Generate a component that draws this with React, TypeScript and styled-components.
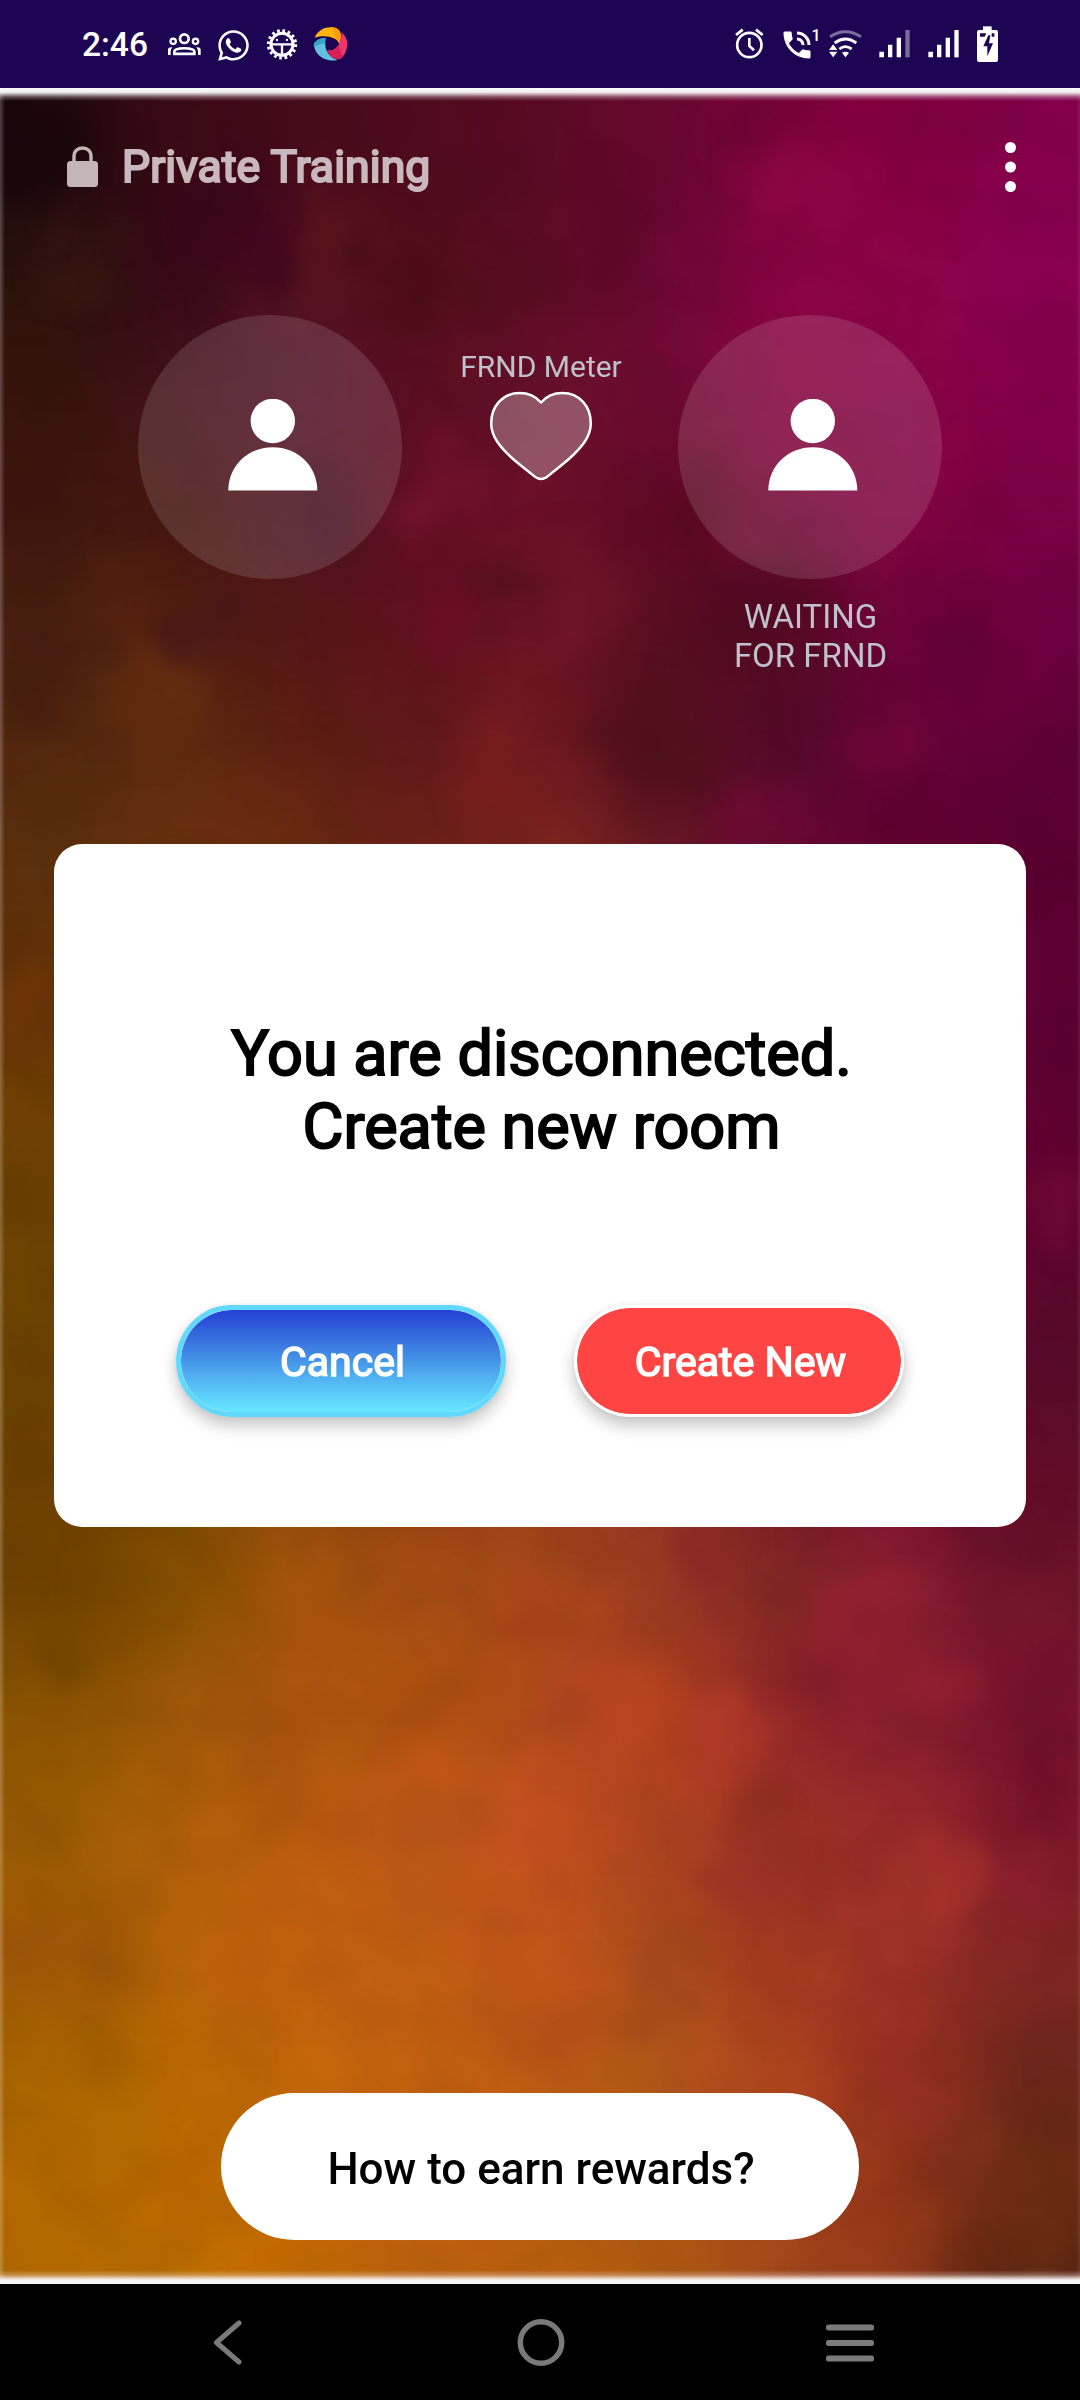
import React from 'react';
import styled, { createGlobalStyle } from 'styled-components';
import { FaWhatsapp } from 'react-icons/fa';
import { MdPhoneInTalk } from 'react-icons/md';

const GlobalStyle = createGlobalStyle`
  * { box-sizing: border-box; }
  body { margin: 0; background: #000; font-family: Roboto, 'Noto Sans', sans-serif; }
  svg { display: block; flex: none; }
`;

const Phone = styled.div`
  width: 1080px;
  height: 2400px;
  display: flex;
  flex-direction: column;
  overflow: hidden;
`;

/* ---------- status bar ---------- */

const StatusBar = styled.header`
  flex: none;
  height: 88px;
  padding: 20px 81px 18px 82px;
  display: flex;
  justify-content: space-between;
  background: #1d0554;
  color: #fff;
`;

const StatusGroup = styled.div`
  display: flex;
  align-items: center;
  height: 50px;
`;

const Clock = styled.span`
  width: 84px;
  font-size: 33.5px;
  font-weight: 500;
  line-height: 52px;
`;

const Slot = styled.span<{ $gap?: number; $w: number }>`
  flex: none;
  display: flex;
  justify-content: center;
  width: ${(p) => p.$w}px;
  margin-left: ${(p) => p.$gap ?? 0}px;
`;

const LineBadge = styled.span`
  align-self: flex-start;
  width: 9px;
  margin: 7px 0 0 -3px;
  font-size: 16px;
  font-weight: 500;
  line-height: 17px;
`;

function StatusGlyph({ x, w, children }: { x: number; w: number; children: React.ReactNode }) {
  return (
    <svg width={w} height={50} viewBox={`${x} 0 ${w * 3} 150`} fill="none">
      {children}
    </svg>
  );
}

const PeopleIcon = () => (
  <StatusGlyph x={18} w={36}>
    <g stroke="#fff" strokeWidth="8">
      <circle cx="73" cy="56" r="13" />
      <circle cx="39.5" cy="64" r="8" strokeWidth="7" />
      <circle cx="106.5" cy="64" r="8" strokeWidth="7" />
      <path d="M43 101.500v-7c0-13 60-13 60 0v7z" />
    </g>
    <path d="M24 105V88q1-7 13-6-5 6-5 12v11zM122 105V88q-1-7-13-6 5 6 5 12v11z" fill="#fff" />
  </StatusGlyph>
);

const BugGearIcon = () => (
  <StatusGlyph x={315} w={34}>
    <circle cx="366" cy="73" r="33" stroke="#fff" strokeWidth="9" />
    <circle cx="366" cy="73" r="41" stroke="#fff" strokeWidth="9" strokeDasharray="8 8.1" />
    <path d="M333 73h66M366 73v34" stroke="#fff" strokeWidth="7" />
    <circle cx="351" cy="60" r="3.500" fill="#fff" />
    <circle cx="381" cy="60" r="3.500" fill="#fff" />
  </StatusGlyph>
);

const SwirlIcon = () => (
  <StatusGlyph x={459} w={35}>
    <path d="M464 53C474 30 494 21 516 22c14 1 22 7 25 16 3 12 0 24-3 33-8-18-38-28-74-18z" fill="#ffb40e" />
    <path d="M510 22c18-1 28 6 31 16 3 12 0 24-3 33-3-9-10-15-15-18 2-13-2-24-13-31z" fill="#ff9a0a" />
    <path d="M497 54c-5 26 2 56 36 66-32 8-72-12-71-50 8-11 20-16 35-16z" fill="#62c1dd" />
    <path d="M497 54c-14 0-27 5-35 16l-1 9c12-3 22-8 33-8z" fill="#35a5c6" />
    <path d="M544 37c14 11 20 26 17 43-3 18-10 30-22 38-18 1-32-11-37-27 22 5 45-18 42-54z" fill="#ee356f" />
    <path d="M502 91c14 3 27-4 34-16 3 16 10 28 12 35l-9 8c-18 1-32-11-37-27z" fill="#d91f54" />
  </StatusGlyph>
);

const AlarmIcon = () => (
  <StatusGlyph x={27} w={31}>
    <circle cx="73" cy="75" r="36.500" stroke="#fff" strokeWidth="8" />
    <path d="M33 45l20-16M113 45L93 29" stroke="#fff" strokeWidth="8.500" />
    <path d="M73 54v24l14 13" stroke="#fff" strokeWidth="8" />
  </StatusGlyph>
);

const WifiIcon = () => (
  <StatusGlyph x={309} w={35}>
    <path d="M315 50q46-30 93 0" stroke="#fff" strokeOpacity=".42" strokeWidth="9" />
    <path d="M329 69q32-24 65 0M343 87q18-14 37 0" stroke="#fff" strokeWidth="8.500" />
    <path d="M351 98q10-5 21 0l-10.500 14z" fill="#fff" />
    <path d="M312 90h25l-12.500-17zM312 95h25l-12.500 17z" fill="#fff" />
  </StatusGlyph>
);

const SignalIcon = ({ weak }: { weak?: boolean }) => (
  <StatusGlyph x={459} w={32}>
    <path d="M463 95h14v17h-14zM489 74h13v38h-13zM515 53h13v59h-13z" fill="#fff" />
    <path d="M541 30h13v82h-13z" fill="#fff" fillOpacity={weak ? 0.42 : 1} />
  </StatusGlyph>
);

const BatteryIcon = () => (
  <StatusGlyph x={753} w={23}>
    <rect x="756" y="30" width="63" height="96" rx="6" fill="#fff" />
    <path d="M774 19h26v14h-26z" fill="#fff" />
    <path d="M765 40h19l-5 10h-14zM800 40h8v10h-8z" fill="#1d0554" />
    <path d="M790 46l-15 33h12v30l17-39h-12l4-24z" fill="#1d0554" />
  </StatusGlyph>
);

/* ---------- backdrop ---------- */

const Screen = styled.main`
  position: relative;
  isolation: isolate;
  flex: none;
  height: 2196px;
  display: flex;
  flex-direction: column;
  align-items: center;
`;

const BackdropLayer = styled.div`
  position: absolute;
  inset: 0;
  z-index: -1;
  overflow: hidden;

  &::after {
    content: '';
    position: absolute;
    inset: 0;
    background:
      linear-gradient(to bottom, #f8f8f8 0, #f4f2f3 4px, rgba(240, 236, 238, 0.75) 6px, rgba(235, 225, 230, 0.32) 9px, rgba(235, 225, 230, 0) 13px),
      linear-gradient(to top, #f8f8f8 0, #f4f2f3 4px, rgba(245, 240, 238, 0.75) 6px, rgba(240, 230, 225, 0.32) 9px, rgba(240, 230, 225, 0) 14px),
      linear-gradient(to right, rgba(255, 255, 255, 0.24) 0, rgba(255, 255, 255, 0) 5px),
      linear-gradient(to left, rgba(255, 255, 255, 0.08) 0, rgba(255, 255, 255, 0) 4px);
  }
`;

/* Colour samples of the artwork: one row every 120px, one column every 120px. */
const MESH = [
  '22090e 3c0a16 480d1a 500b1e 5a0a24 680830 7c043a 880042 84004a',
  '2c120c 380818 581320 521018 5e0c24 6c0834 8a0444 8c0446 880050',
  '36140c 44121a 521228 5c0e22 66102a 700a34 86043e 8a0448 86004a',
  '40170e 48150f 4e1420 640f22 6e1028 600a26 780838 820440 7e0046',
  '482010 542010 521616 66121e 6c1424 5c1020 520a22 70043a 6c0040',
  '56280e 602c10 602012 621a1a 721a20 54101e 540a2a 660436 5e0038',
  '5c300c 6a300c 6c2c10 6c2018 80281e 6c1a22 6c0a34 620030 5c0030',
  '643208 6a300c 6a2c10 6c2018 7c241e 6c1a22 6c0a34 620030 5e0034',
  '704004 703808 702c10 702018 7c241e 6c1a22 6c0a34 620030 600030',
  '684002 703c08 703010 702818 80281e 6c1a22 6c0a34 620030 620430',
  '6e4400 744004 803c10 803018 8c301e 7c2022 701030 680830 580a2a',
  '6c4000 7c4800 904a0c 984014 98401a 8c3022 801828 780c2c 600c28',
  '704200 865000 a4540c a44c14 aa481a a03c22 802824 8e2032 701428',
  '8c5400 a05808 ae5410 b4520e b44c1c b8441f 922628 8c1e30 7a142e',
  '9c5c04 b06008 bc5c0e c0561a c25020 b64622 983024 9a2a2a 7e162a',
  'a05806 b8620a c4600e c05c12 c2541a aa4a1c a03620 a4322a 842624',
  'a86400 b86802 c6680c c4600f be5a14 b85a1a b0461e 98301f 70281c',
  'b46800 ba6800 c66a06 c06010 bc6010 b05818 a8441c 903418 6c2c14',
  'b26900 c07000 c66c02 c0640c b85e0c b05a0c a44a1c 88341c 542210',
].map((row) => row.split(' '));

const COLS = [0, 0, 1, 2, 3, 4, 5, 6, 7, 8, 8];

/* Cloudy patches over the mesh: cx, cy, rx, ry, colour, opacity. */
const CLOUDS: [number, number, number, number, string, number][] = [
  [20, 150, 50, 70, '#12030a', 0.5],
  [240, 230, 70, 60, '#3c0420', 0.6],
  [330, 250, 34, 60, '#66181a', 0.55],
  [410, 290, 46, 44, '#4a0c14', 0.6],
  [90, 270, 30, 50, '#3c1a10', 0.6],
  [615, 250, 26, 60, '#560826', 0.5],
  [800, 190, 70, 50, '#920648', 0.45],
  [900, 150, 30, 50, '#78003a', 0.5],
  [830, 290, 60, 30, '#92084a', 0.5],
  [500, 300, 50, 30, '#54101a', 0.5],
  [440, 475, 40, 45, '#781430', 0.6],
  [330, 520, 44, 40, '#441028', 0.5],
  [700, 520, 40, 50, '#56081e', 0.6],
  [500, 590, 36, 32, '#4e1018', 0.7],
  [450, 610, 30, 36, '#780c2c', 0.5],
  [580, 600, 40, 60, '#76182a', 0.5],
  [750, 600, 60, 40, '#500822', 0.6],
  [200, 640, 32, 36, '#46161a', 0.65],
  [120, 610, 40, 50, '#5c240e', 0.5],
  [160, 700, 50, 50, '#6a300e', 0.6],
  [30, 680, 30, 50, '#421a10', 0.6],
  [500, 770, 40, 60, '#82201e', 0.5],
  [650, 740, 60, 50, '#521018', 0.6],
  [890, 750, 34, 38, '#78063c', 0.6],
  [760, 810, 40, 36, '#78083a', 0.5],
  [1010, 700, 40, 60, '#700040', 0.5],
  [940, 640, 40, 40, '#60003a', 0.5],
  [20, 1010, 24, 60, '#7a3a08', 0.6],
  [1060, 1200, 24, 60, '#740c34', 0.6],
  [1060, 1060, 22, 50, '#560030', 0.6],
  [20, 1250, 24, 50, '#744804', 0.6],
  [60, 1660, 44, 30, '#744600', 0.5],
  [130, 1580, 50, 30, '#744400', 0.5],
  [320, 1590, 40, 50, '#b0560e', 0.5],
  [530, 1610, 30, 40, '#a43c18', 0.5],
  [480, 1690, 30, 30, '#a44a10', 0.6],
  [700, 1570, 30, 44, '#8c2428', 0.6],
  [860, 1620, 50, 36, '#9c2030', 0.6],
  [1000, 1540, 40, 40, '#64102a', 0.6],
  [1040, 1600, 30, 30, '#78182c', 0.5],
  [590, 1690, 50, 50, '#ba4424', 0.5],
  [730, 1735, 34, 44, '#b43c2a', 0.6],
  [830, 1680, 40, 50, '#881e2c', 0.55],
  [1050, 1700, 34, 60, '#78102e', 0.6],
  [930, 1690, 36, 40, '#9c2230', 0.5],
  [1040, 1780, 26, 50, '#6a0e26', 0.6],
  [450, 1770, 70, 36, '#c45818', 0.5],
  [340, 1760, 40, 40, '#b05c0c', 0.5],
  [560, 1800, 50, 50, '#c44e22', 0.5],
  [420, 1840, 40, 30, '#b45618', 0.5],
  [740, 1860, 50, 50, '#943024', 0.6],
  [930, 1880, 50, 40, '#ac342c', 0.6],
  [1030, 1870, 30, 36, '#902030', 0.6],
  [500, 1900, 50, 40, '#c6581a', 0.5],
  [670, 1975, 34, 44, '#a0441c', 0.65],
  [820, 1960, 36, 40, '#ae4022', 0.5],
  [840, 2010, 40, 40, '#9c3422', 0.6],
  [70, 1950, 60, 34, '#9a5208', 0.5],
  [140, 1950, 34, 40, '#b06404', 0.4],
  [240, 1990, 40, 50, '#c0600e', 0.5],
  [570, 2030, 50, 40, '#c2501a', 0.5],
  [610, 2070, 36, 30, '#b05a14', 0.6],
  [710, 2090, 36, 40, '#b44a20', 0.5],
  [910, 2080, 50, 40, '#962e24', 0.5],
  [1040, 2200, 30, 90, '#6c3014', 0.5],
  [970, 2150, 40, 50, '#803020', 0.5],
  [110, 2120, 40, 50, '#b06c00', 0.5],
  [880, 2260, 50, 40, '#a04018', 0.5],
];

function Backdrop() {
  return (
    <BackdropLayer>
      <svg width="1080" height="2196" viewBox="0 88 1080 2196">
        <defs>
          <filter id="melt" filterUnits="userSpaceOnUse" x="-120" y="-60" width="1320" height="2520" colorInterpolationFilters="sRGB">
            <feGaussianBlur stdDeviation="42" />
          </filter>
          <filter id="haze" filterUnits="userSpaceOnUse" x="-120" y="-60" width="1320" height="2520" colorInterpolationFilters="sRGB">
            <feGaussianBlur stdDeviation="15" result="soft" />
            <feTurbulence type="fractalNoise" baseFrequency="0.016" numOctaves="2" seed="7" result="noise" />
            <feDisplacementMap in="soft" in2="noise" scale="85" xChannelSelector="R" yChannelSelector="G" />
            <feGaussianBlur stdDeviation="6" />
          </filter>
          <filter id="mottle" filterUnits="userSpaceOnUse" x="0" y="88" width="1080" height="2196" colorInterpolationFilters="sRGB">
            <feTurbulence type="fractalNoise" baseFrequency="0.013" numOctaves="2" seed="3" />
            <feColorMatrix values="0 0 0 0 0  0 0 0 0 0  0 0 0 0 0  1.6 0 0 0 -0.6" />
          </filter>
        </defs>
        <g filter="url(#melt)" shapeRendering="crispEdges">
          {[MESH[0], ...MESH, MESH[MESH.length - 1]].map((row, r) =>
            COLS.map((c, i) => (
              <rect key={`${r}-${i}`} x={(i - 1) * 120} y={90 + (r - 1) * 120} width="120" height="120" fill={`#${row[c]}`} />
            )),
          )}
        </g>
        <g filter="url(#haze)">
          {CLOUDS.map(([cx, cy, rx, ry, fill, opacity], i) => (
            <ellipse key={i} cx={cx} cy={cy} rx={rx} ry={ry} fill={fill} opacity={opacity} />
          ))}
        </g>
        <rect y="88" width="1080" height="2196" filter="url(#mottle)" opacity="0.09" />
      </svg>
    </BackdropLayer>
  );
}

/* ---------- room ---------- */

const RoomHeader = styled.div`
  align-self: stretch;
  height: 158px;
  padding: 0 64px 0 67px;
  display: flex;
  align-items: center;
`;

const RoomTitle = styled.h1`
  flex: 1;
  margin: 0 0 0 24px;
  font-size: 44.5px;
  font-weight: 400;
  line-height: 54px;
  letter-spacing: 0.1px;
  color: #c9b8be;
  -webkit-text-stroke: 2.2px #c9b8be;
`;

const Participants = styled.section`
  width: 804px;
  height: 360px;
  margin-top: 69px;
  display: grid;
  grid-template-columns: 264px 1fr 264px;
`;

const Seat = styled.div`
  display: flex;
  flex-direction: column;
  align-items: center;
`;

const Avatar = styled.div`
  width: 264px;
  height: 264px;
  padding: 84px 0 0 90px;
  border-radius: 50%;
  background: rgba(255, 255, 255, 0.125);
`;

const SeatLabel = styled.p`
  width: 170px;
  margin: 18px 0 0;
  padding-left: 1px;
  font-size: 33px;
  line-height: 39px;
  text-align: center;
  color: #bfc2cc;
`;

const Meter = styled.div`
  display: flex;
  flex-direction: column;
  align-items: center;
  padding: 34px 0 0 2px;
`;

const MeterLabel = styled.span`
  margin-bottom: 6px;
  font-size: 30px;
  line-height: 36px;
  color: #bfc2cc;
`;

const PersonIcon = () => (
  <svg width="90" height="92" viewBox="0 0 90 92" fill="#fff">
    <circle cx="44.800" cy="22" r="22.200" />
    <path d="M0.300 91.600C0.300 67 19.800 48.200 44.800 48.200S89.300 67 89.300 91.600z" />
  </svg>
);

const HeartIcon = () => (
  <svg width="104" height="90" viewBox="0 0 104 90">
    <path
      d="M52 11.500C46 4.500 39 2 30.500 2 14 2 2.200 15 2.200 32.500 2.200 46 12 57 23 67c8 7.200 15 12 21.500 17.600 2.500 2.200 5 3.400 7.500 3.400s5-1.200 7.500-3.400C66 79 73 74.200 81 67c11-10 20.800-21 20.800-34.500C101.800 15 90 2 73.500 2 65 2 58 4.500 52 11.500z"
      fill="#fff"
      fillOpacity=".28"
      stroke="#fff"
      strokeWidth="2.500"
      strokeLinejoin="round"
    />
  </svg>
);

/* ---------- dialog ---------- */

const Dialog = styled.section`
  width: 972px;
  height: 683px;
  margin-top: 169px;
  padding-top: 173px;
  display: flex;
  flex-direction: column;
  align-items: center;
  border-radius: 28px;
  background: #fff;
`;

const Message = styled.p`
  width: 700px;
  margin: 0;
  padding-left: 3px;
  font-size: 63px;
  line-height: 73px;
  text-align: center;
  color: #000;
  -webkit-text-stroke: 2px #000;
`;

const Actions = styled.div`
  display: flex;
  gap: 68px;
  margin-top: 142px;
`;

const PillButton = styled.button<{ $primary?: boolean }>`
  width: 330px;
  height: 112px;
  padding: 2px 0 0 3px;
  border: ${(p) => (p.$primary ? '3px solid #fff' : '5px solid #62d8ff')};
  border-radius: 56px;
  background: ${(p) =>
    p.$primary
      ? '#ff4444 padding-box'
      : 'linear-gradient(to bottom, #2440d4 0%, #3f87e4 42%, #52b4f2 68%, #66e8ff 100%) padding-box'};
  box-shadow: 0 9px 16px rgba(0, 0, 0, 0.22), 0 0 5px rgba(0, 0, 0, 0.07);
  font-family: inherit;
  font-size: 41px;
  line-height: 48px;
  color: #fff;
  -webkit-text-stroke: 1.5px #fff;
`;

const RewardsButton = styled.button`
  width: 638px;
  height: 147px;
  margin-top: 566px;
  padding: 4px 0 0 2px;
  border: 0;
  border-radius: 74px;
  background: #fff;
  font-family: inherit;
  font-size: 44px;
  font-weight: 500;
  line-height: 52px;
  color: #000;
`;

/* ---------- navigation bar ---------- */

const NavBar = styled.nav`
  flex: 1;
  padding: 2px 206px 0 212px;
  display: flex;
  align-items: center;
  justify-content: space-between;
  background: #000;
`;

const HomeKey = styled.span`
  margin-left: 13px;
`;

export default function App() {
  return (
    <>
      <GlobalStyle />
      <Phone>
        <StatusBar>
          <StatusGroup>
            <Clock>2:46</Clock>
            <Slot $w={36}><PeopleIcon /></Slot>
            <Slot $w={35} $gap={14}><FaWhatsapp size={35} /></Slot>
            <Slot $w={34} $gap={14}><BugGearIcon /></Slot>
            <Slot $w={35} $gap={14}><SwirlIcon /></Slot>
          </StatusGroup>
          <StatusGroup>
            <Slot $w={31}><AlarmIcon /></Slot>
            <Slot $w={36} $gap={13.5}><MdPhoneInTalk size={36} /></Slot>
            <LineBadge>1</LineBadge>
            <Slot $w={35} $gap={7.5}><WifiIcon /></Slot>
            <Slot $w={32} $gap={15}><SignalIcon weak /></Slot>
            <Slot $w={32} $gap={17}><SignalIcon /></Slot>
            <Slot $w={23} $gap={17}><BatteryIcon /></Slot>
          </StatusGroup>
        </StatusBar>

        <Screen>
          <Backdrop />
          <RoomHeader>
            <svg width="31" height="43" viewBox="0 0 31 43">
              <path d="M7 17v-6.500C7 5 10.500 2 15.500 2S24 5 24 10.500V17" fill="none" stroke="#c4b5b8" strokeWidth="3.400" />
              <rect y="15" width="31" height="26" rx="3.500" fill="#c4b5b8" />
            </svg>
            <RoomTitle>Private Training</RoomTitle>
            <svg width="11" height="50" viewBox="0 0 11 50" fill="#fff">
              <circle cx="5.500" cy="5.500" r="5.500" />
              <circle cx="5.500" cy="25" r="5.500" />
              <circle cx="5.500" cy="44.500" r="5.500" />
            </svg>
          </RoomHeader>

          <Participants>
            <Seat>
              <Avatar><PersonIcon /></Avatar>
            </Seat>
            <Meter>
              <MeterLabel>FRND Meter</MeterLabel>
              <HeartIcon />
            </Meter>
            <Seat>
              <Avatar><PersonIcon /></Avatar>
              <SeatLabel>WAITING FOR FRND</SeatLabel>
            </Seat>
          </Participants>

          <Dialog>
            <Message>You are disconnected. Create new room</Message>
            <Actions>
              <PillButton>Cancel</PillButton>
              <PillButton $primary>Create New</PillButton>
            </Actions>
          </Dialog>

          <RewardsButton>How to earn rewards?</RewardsButton>
        </Screen>

        <NavBar>
          <svg width="30" height="48" viewBox="0 0 30 48" fill="none" stroke="#7a7a7a" strokeWidth="5" strokeLinecap="round" strokeLinejoin="round">
            <path d="M27 4L4.500 23.500 27 43" />
          </svg>
          <HomeKey>
            <svg width="48" height="48" viewBox="0 0 48 48" fill="none" stroke="#7a7a7a" strokeWidth="5.500">
              <circle cx="24" cy="23.500" r="20.700" />
            </svg>
          </HomeKey>
          <svg width="48" height="40" viewBox="0 0 48 40" fill="#7a7a7a">
            <rect y="1.500" width="48" height="6" rx="2.500" />
            <rect y="17" width="48" height="6" rx="2.500" />
            <rect y="32.500" width="48" height="6" rx="2.500" />
          </svg>
        </NavBar>
      </Phone>
    </>
  );
}
